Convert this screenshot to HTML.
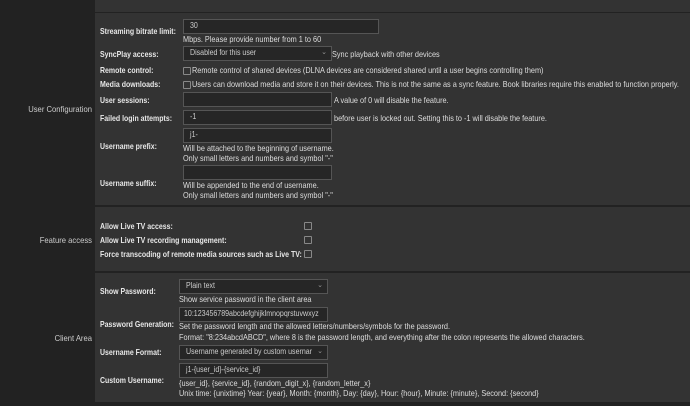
<!DOCTYPE html>
<html><head><style>
body{margin:0;width:690px;height:406px;background:#222;overflow:hidden;font-family:"Liberation Sans",sans-serif;font-size:8.5px;color:#ddd;position:relative}
.p{position:absolute;left:95px;width:595px;background:#333}
.a{position:absolute;white-space:nowrap;line-height:10px;transform:scaleX(0.86);transform-origin:0 0}
.b{font-weight:bold;color:#e8e8e8;transform:scaleX(0.82)}
.sec{position:absolute;color:#ccc;text-align:right;width:92px;left:0;transform:scaleX(0.9);transform-origin:100% 0}
.in{position:absolute;background:#262626;border:1px solid #555;box-sizing:border-box;color:#ccc;padding-left:6px;line-height:12px;font-size:8px;overflow:hidden;white-space:nowrap}
.in i{font-style:normal;display:inline-block;transform:scaleX(0.88);transform-origin:0 0}
.cb{position:absolute;width:6px;height:6px;border:1px solid #888;border-radius:1px}
.ar{position:absolute;right:0;top:0;color:#999;font-size:7px;background:#262626;padding:0 4px 0 3px}
</style></head><body>
<div class="p" style="top:0;height:12px"></div>
<div class="p" style="top:13px;height:192px"></div>
<div class="p" style="top:207px;height:64px"></div>
<div class="p" style="top:273px;height:129px"></div>

<div class="sec" style="top:104px">User Configuration</div>
<div class="sec" style="top:235px">Feature access</div>
<div class="sec" style="top:333px">Client Area</div>

<div class="a b" style="left:100px;top:26px">Streaming bitrate limit:</div>
<div class="in" style="left:183px;top:19px;width:196px;height:15px"><i>30</i></div>
<div class="a" style="left:183px;top:34px">Mbps. Please provide number from 1 to 60</div>

<div class="a b" style="left:100px;top:49px">SyncPlay access:</div>
<div class="in" style="left:183px;top:46px;width:149px;height:15px"><i>Disabled for this user</i><span class="ar">⌄</span></div>
<div class="a" style="left:332px;top:49px">Sync playback with other devices</div>

<div class="a b" style="left:100px;top:65px">Remote control:</div>
<div class="cb" style="left:183px;top:67px"></div>
<div class="a" style="left:192px;top:65px">Remote control of shared devices (DLNA devices are considered shared until a user begins controlling them)</div>

<div class="a b" style="left:100px;top:79px">Media downloads:</div>
<div class="cb" style="left:183px;top:81px"></div>
<div class="a" style="left:192px;top:79px">Users can download media and store it on their devices. This is not the same as a sync feature. Book libraries require this enabled to function properly.</div>

<div class="a b" style="left:100px;top:95px">User sessions:</div>
<div class="in" style="left:183px;top:92px;width:149px;height:15px"></div>
<div class="a" style="left:334px;top:95px">A value of 0 will disable the feature.</div>

<div class="a b" style="left:100px;top:113px">Failed login attempts:</div>
<div class="in" style="left:183px;top:110px;width:149px;height:15px"><i>-1</i></div>
<div class="a" style="left:334px;top:113px">before user is locked out. Setting this to -1 will disable the feature.</div>

<div class="in" style="left:183px;top:128px;width:149px;height:15px"><i>j1-</i></div>
<div class="a b" style="left:100px;top:141px">Username prefix:</div>
<div class="a" style="left:183px;top:143px">Will be attached to the beginning of username.</div>
<div class="a" style="left:183px;top:153px">Only small letters and numbers and symbol "-"</div>

<div class="in" style="left:183px;top:165px;width:149px;height:15px"></div>
<div class="a b" style="left:100px;top:178px">Username suffix:</div>
<div class="a" style="left:183px;top:180px">Will be appended to the end of username.</div>
<div class="a" style="left:183px;top:190px">Only small letters and numbers and symbol "-"</div>

<div class="a b" style="left:100px;top:221px">Allow Live TV access:</div>
<div class="cb" style="left:304px;top:222px"></div>
<div class="a b" style="left:100px;top:235px">Allow Live TV recording management:</div>
<div class="cb" style="left:304px;top:236px"></div>
<div class="a b" style="left:100px;top:249px">Force transcoding of remote media sources such as Live TV:</div>
<div class="cb" style="left:304px;top:250px"></div>

<div class="a b" style="left:100px;top:286px">Show Password:</div>
<div class="in" style="left:179px;top:279px;width:149px;height:15px"><i>Plain text</i><span class="ar">⌄</span></div>
<div class="a" style="left:179px;top:294px">Show service password in the client area</div>

<div class="in" style="left:179px;top:307px;width:149px;height:15px;padding-left:4px"><i>10:123456789abcdefghijklmnopqrstuvwxyz</i></div>
<div class="a b" style="left:100px;top:319px">Password Generation:</div>
<div class="a" style="left:179px;top:321px">Set the password length and the allowed letters/numbers/symbols for the password.</div>
<div class="a" style="left:179px;top:332px">Format: "8:234abcdABCD", where 8 is the password length, and everything after the colon represents the allowed characters.</div>

<div class="a b" style="left:100px;top:347px">Username Format:</div>
<div class="in" style="left:179px;top:345px;width:149px;height:15px"><i>Username generated by custom usernar</i><span class="ar">⌄</span></div>

<div class="in" style="left:179px;top:363px;width:149px;height:15px"><i>j1-{user_id}-{service_id}</i></div>
<div class="a b" style="left:100px;top:375px">Custom Username:</div>
<div class="a" style="left:179px;top:378px">{user_id}, {service_id}, {random_digit_x}, {random_letter_x}</div>
<div class="a" style="left:179px;top:388px">Unix time: {unixtime} Year: {year}, Month: {month}, Day: {day}, Hour: {hour}, Minute: {minute}, Second: {second}</div>
</body></html>
